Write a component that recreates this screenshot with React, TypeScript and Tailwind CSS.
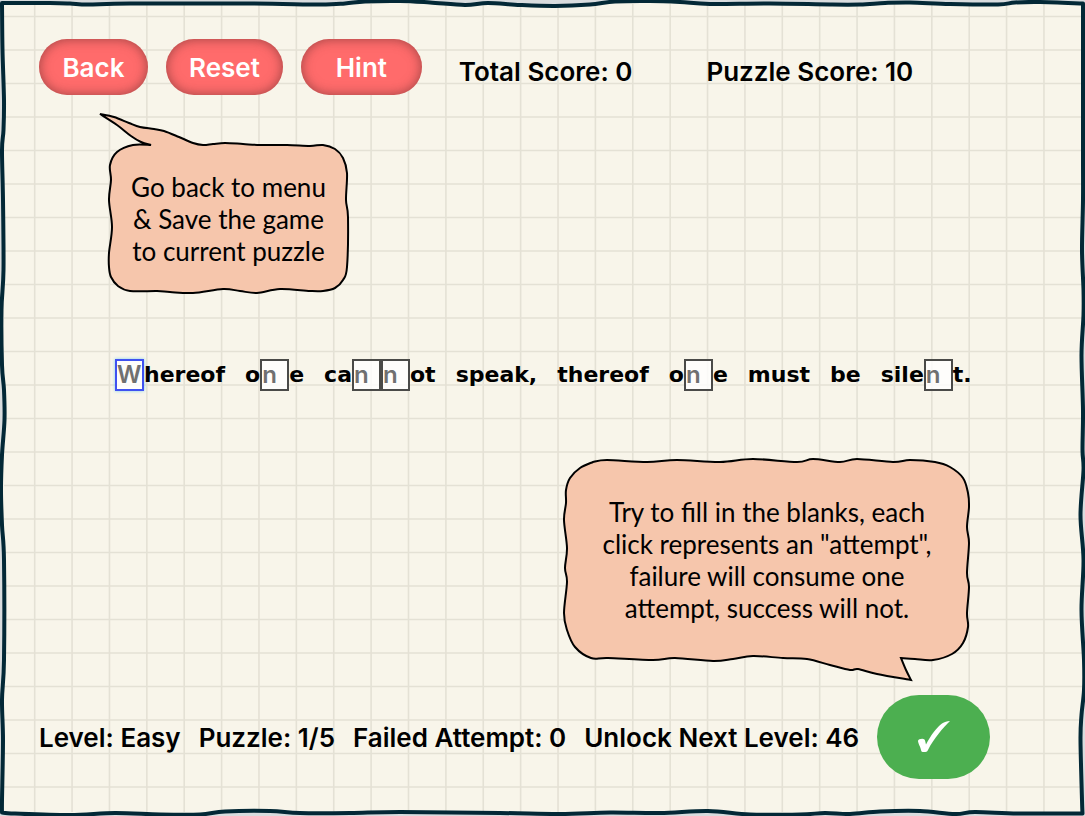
import { Fragment, useState } from "react";
import type { ReactNode } from "react";

type Point = [number, number];

/** Joins points with a smooth curve; every run of points ends in a sharp corner. */
function sketchPath(runs: Point[][]): string {
  let d = `M${runs[0][0].join(" ")}`;
  for (const run of runs) {
    for (let i = 0; i < run.length - 1; i++) {
      const a = run[Math.max(i - 1, 0)];
      const b = run[i];
      const c = run[i + 1];
      const e = run[Math.min(i + 2, run.length - 1)];
      d += `C${b[0] + (c[0] - a[0]) / 6} ${b[1] + (c[1] - a[1]) / 6} ${c[0] - (e[0] - b[0]) / 6} ${c[1] - (e[1] - b[1]) / 6} ${c[0]} ${c[1]}`;
    }
  }
  return d + "Z";
}

const FRAME: Point[][] = [
  [[2, 3], [50, 3], [70, 3.5], [88, 4.5], [130, 3.5], [250, 3.5], [320, 4.5], [345, 3.5], [365, 1.5], [400, 1], [430, 2.5], [465, 5], [488, 3], [520, 5], [555, 6], [590, 4.5], [615, 1.5], [650, 1], [680, 2], [710, 4], [770, 3.5], [830, 4.5], [860, 4.5], [885, 3], [910, 2.5], [950, 4], [998, 4.5], [1015, 2.5], [1040, 2], [1083, 3.5]],
  [[1083, 3.5], [1083, 150], [1083, 200], [1082, 250], [1083.5, 290], [1083.5, 315], [1081.5, 355], [1083, 410], [1082.5, 450], [1083.5, 470], [1080.5, 515], [1083.5, 560], [1081.5, 610], [1084, 660], [1084, 690], [1081.5, 715], [1080.5, 740], [1082, 800], [1082.5, 813.5]],
  [[1082.5, 813.5], [1020, 813.5], [975, 812], [955, 814], [920, 811], [880, 811.5], [850, 814], [825, 813], [800, 814.5], [750, 814.5], [708, 811], [660, 813], [610, 812.5], [560, 814], [500, 813], [400, 812], [350, 813], [300, 813], [270, 811], [225, 811.5], [200, 814.5], [160, 814.5], [115, 813], [70, 815], [15, 813.5], [2, 812.5]],
  [[2, 812.5], [2, 800], [3, 740], [2, 700], [4, 660], [4, 560], [2, 525], [1, 490], [2, 455], [4.5, 420], [4, 390], [2, 365], [1.5, 310], [3.5, 270], [3, 200], [2, 150], [3.5, 130], [4, 100], [2.5, 50], [2, 3]],
];

const BACK_BUBBLE: Point[][] = [
  [[-9, -31], [5, -28], [20, -22], [31, -18], [45, -16], [55, -14], [70, -8], [84, -2], [94, 0], [104, -1], [116, -2], [134, -1], [151, 0], [178, 0], [201, 1], [214, 0], [226, 4], [234, 13], [238, 28], [237, 55], [239, 72], [238, 122], [234, 135], [226, 143], [214, 146], [201, 146], [171, 144], [148, 148], [131, 146], [114, 144], [84, 148], [61, 147], [48, 146], [21, 146], [9, 141], [2, 132], [0, 122], [0, 108], [3, 82], [0, 55], [2, 35], [1, 20], [8, 7], [24, 0], [42, 0]],
  [[42, 0], [32, -3], [22, -9], [8, -20], [-9, -31]],
];

const HELP_BUBBLE: Point[][] = [
  [[28, 1], [42, -1], [82, 1], [112, -1], [155, 1], [188, -2], [232, 1], [248, -2], [275, 1], [292, -2], [328, 1], [345, -1], [370, 1], [385, 6], [398, 17], [403, 32], [404, 46], [402, 66], [404, 82], [402, 112], [404, 126], [402, 152], [403, 166], [398, 182], [387, 193], [368, 199], [350, 198], [336, 197]],
  [[336, 197], [341, 209], [346, 219]],
  [[346, 219], [312, 213], [293, 208], [285, 209], [265, 204], [242, 198], [218, 197], [188, 195], [168, 198], [148, 200], [110, 197], [88, 199], [43, 197], [26, 197], [10, 186], [2, 169], [-1, 152], [2, 121], [0, 107], [2, 87], [-1, 59], [1, 42], [1, 29], [5, 17], [15, 7], [28, 1]],
];

function Paper() {
  const columns = Array.from({ length: 28 }, (_, i) => 34.7 + i * 37.38);
  const rows = Array.from({ length: 24 }, (_, i) => 16.5 + i * 33.5);
  return (
    <svg aria-hidden="true" viewBox="0 0 1085 816" preserveAspectRatio="none" className="absolute inset-0 h-full w-full">
      <path d={sketchPath(FRAME)} fill="#f8f5ea" />
      <g stroke="#e4e1d5" strokeWidth="1.6">
        {columns.map((x) => (
          <line key={x} x1={x} x2={x} y1="4" y2="812" />
        ))}
        {rows.map((y) => (
          <line key={y} x1="4" x2="1082" y1={y} y2={y} />
        ))}
      </g>
      <path d={sketchPath(FRAME)} fill="none" stroke="#032836" strokeWidth="4" strokeLinejoin="round" />
    </svg>
  );
}

function Bubble({ outline, box, className, children }: { outline: Point[][]; box: string; className: string; children: ReactNode }) {
  return (
    <aside className={`relative text-center font-[Lato,sans-serif] text-[26px] leading-8 ${className}`}>
      <svg aria-hidden="true" viewBox={box} preserveAspectRatio="none" className="absolute inset-0 h-full w-full overflow-visible">
        <path d={sketchPath(outline)} fill="#f6c6ac" stroke="#000" strokeWidth="2" />
      </svg>
      <p className="relative">{children}</p>
    </aside>
  );
}

function PillButton({ children }: { children: ReactNode }) {
  return (
    <button
      type="button"
      className="h-14 min-w-[109px] rounded-full bg-[#ff6b6b] px-[23px] text-[26px] text-white shadow-[inset_0_0_12px_rgba(90,40,40,0.6)] last:min-w-[121px]"
    >
      {children}
    </button>
  );
}

const SENTENCE = ["[W]hereof", "o[n]e", "ca[n][n]ot", "speak,", "thereof", "o[n]e", "must", "be", "sile[n]t."];

function Blank({ letter, label }: { letter: string; label: string }) {
  const [value, setValue] = useState("");
  const first = letter === "W";
  return (
    <input
      aria-label={label}
      placeholder={letter}
      value={value}
      maxLength={1}
      onChange={(event) => setValue(event.target.value)}
      className={`h-8 w-[29px] border-2 bg-white/80 font-[Inter,sans-serif] text-[24px] font-semibold text-[#707070] placeholder:text-[#707070] ${
        first ? "border-[#3f51f0] shadow-[0_0_3px_#7fd0f0]" : "border-[#4a4a48]"
      }`}
    />
  );
}

function Word({ text, index }: { text: string; index: number }) {
  const parts = text.split(/\[(\w)\]/);
  return (
    <span className="flex items-center">
      {parts.map((part, i) => (
        <Fragment key={i}>{i % 2 ? <Blank letter={part} label={`Word ${index + 1}, blank ${(i + 1) / 2}`} /> : part}</Fragment>
      ))}
    </span>
  );
}

export default function App() {
  return (
    <div className="relative min-h-screen bg-[#d9dcde] font-[Inter,sans-serif] font-semibold text-black">
      <Paper />
      <div className="relative flex min-h-screen flex-col pt-[39px] pb-[37px] pl-[39px]">
        <header className="flex items-center">
          <nav className="flex gap-[18px]">
            <PillButton>Back</PillButton>
            <PillButton>Reset</PillButton>
            <PillButton>Hint</PillButton>
          </nav>
          <div className="flex gap-[74px] pt-2 pl-[37px] text-[26px]">
            <span>Total Score: 0</span>
            <span>Puzzle Score: 10</span>
          </div>
        </header>

        <Bubble outline={BACK_BUBBLE} box="0 0 239 146" className="mt-[50px] ml-[70px] w-[239px] pt-[26px] pb-6 font-normal">
          Go back to menu
          <br />
          &amp; Save the game
          <br />
          to current puzzle
        </Bubble>

        <main className="mt-[68px] flex flex-wrap gap-x-5 gap-y-4 pr-10 pl-[76px] font-['DejaVu_Sans',sans-serif] text-[22px] leading-8 font-bold">
          {SENTENCE.map((text, i) => (
            <Word key={i} text={text} index={i} />
          ))}
        </main>

        <Bubble outline={HELP_BUBBLE} box="0 0 404 199" className="mt-[70px] mr-[116px] w-[404px] self-end pt-[35px] pb-9 font-normal">
          Try to fill in the blanks, each
          <br />
          click represents an "attempt",
          <br />
          failure will consume one
          <br />
          attempt, success will not.
        </Bubble>

        <footer className="mt-auto flex items-center gap-[18px] text-[26px]">
          <span>Level: Easy</span>
          <span>Puzzle: 1/5</span>
          <span>Failed Attempt: 0</span>
          <span>Unlock Next Level: 46</span>
          <button type="button" aria-label="Check answer" className="flex h-[84px] w-[113px] items-center justify-center rounded-full bg-[#4caf50]">
            <svg aria-hidden="true" viewBox="0 0 32 32" className="size-8">
              <path d="M0 20C0 18 5 17 6.500 18.500C7.500 20 7.500 22 8 23.500C13 14 19 6 24 2.500C26.500 1 29 0 32 0C25 7 16 17 10 29C9 31 8 31 6 31C4 31 3.500 31 3 29C2.500 26 0 22 0 20Z" fill="#fff" />
            </svg>
          </button>
        </footer>
      </div>
    </div>
  );
}
